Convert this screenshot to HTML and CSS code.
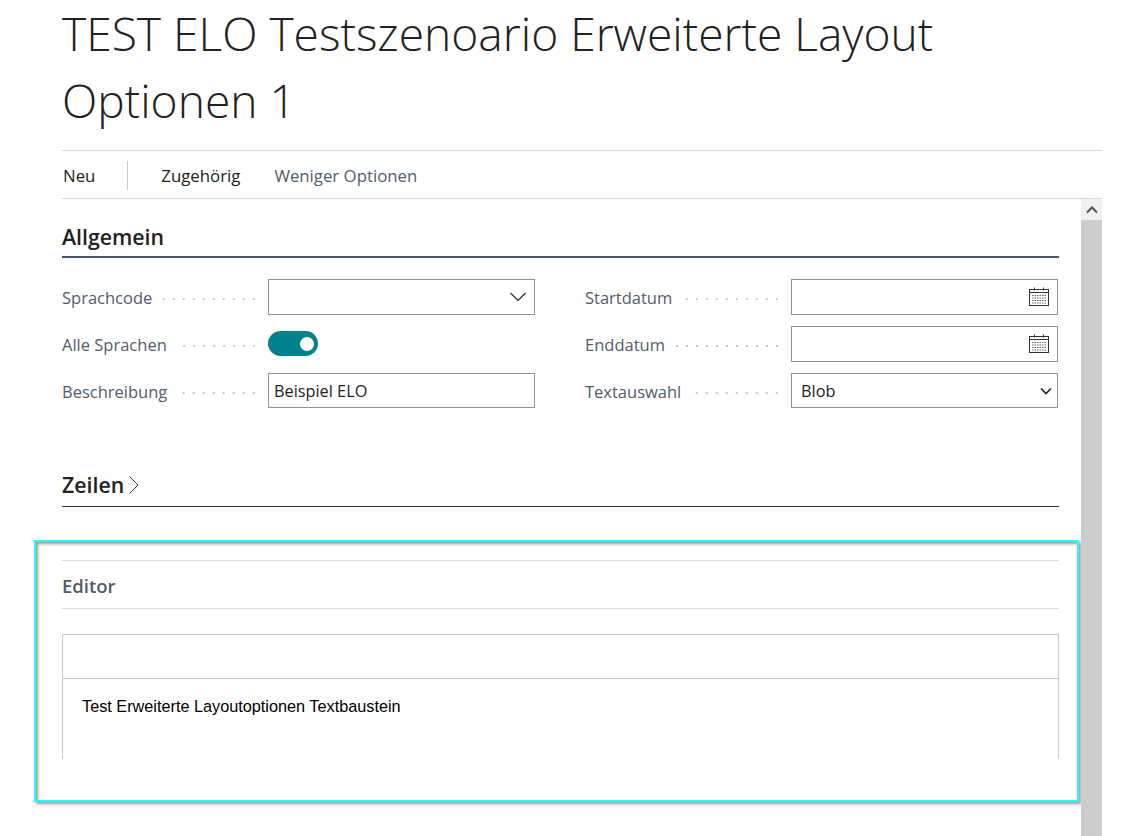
FILE: index.html
```html
<!DOCTYPE html>
<html lang="de">
<head>
<meta charset="utf-8">
<title>TEST ELO</title>
<link rel="stylesheet" href="styles.css">
</head>
<body>
<div class="page">
  <h1 class="title">TEST ELO Testszenoario Erweiterte Layout Optionen 1</h1>
  <nav class="commands">
    <span class="cmd cmd-new">Neu</span>
    <span class="cmd-sep"></span>
    <span class="cmd cmd-rel">Zugehörig</span>
    <span class="cmd cmd-less">Weniger Optionen</span>
  </nav>
  <div class="body">
    <main class="content">
      <h2 class="group-title">Allgemein</h2>
      <div class="fields">
        <div class="col">
          <div class="field">
            <span class="label">Sprachcode</span><span class="dots"></span>
            <div class="input input-tall">
              <svg class="chev-thin" width="16" height="10" viewBox="0 0 16 10"><path d="M.5 1 8 8.500 15.500 1" fill="none" stroke="#212121" stroke-width="1.100"/></svg>
            </div>
          </div>
          <div class="field">
            <span class="label">Alle Sprachen</span><span class="dots"></span>
            <div class="toggle"><span class="knob"></span></div>
          </div>
          <div class="field">
            <span class="label">Beschreibung</span><span class="dots"></span>
            <div class="input input-short"><span class="value">Beispiel ELO</span></div>
          </div>
        </div>
        <div class="col col-right">
          <div class="field">
            <span class="label">Startdatum</span><span class="dots"></span>
            <div class="input input-tall">
              <svg class="cal" width="20" height="20" viewBox="0 0 20 20"><use href="#cal-icon"/></svg>
            </div>
          </div>
          <div class="field">
            <span class="label">Enddatum</span><span class="dots"></span>
            <div class="input input-tall">
              <svg class="cal" width="20" height="20" viewBox="0 0 20 20"><use href="#cal-icon"/></svg>
            </div>
          </div>
          <div class="field">
            <span class="label">Textauswahl</span><span class="dots"></span>
            <div class="input input-short input-select">
              <span class="value">Blob</span>
              <svg class="chev-bold" width="12" height="8" viewBox="0 0 12 8"><path d="M1 1.500 6 6.500 11 1.500" fill="none" stroke="#222" stroke-width="1.600"/></svg>
            </div>
          </div>
        </div>
      </div>
      <div class="lines-head">
        <span class="lines-title">Zeilen</span>
        <svg width="10" height="18" viewBox="0 0 10 18"><path d="M.5 .5 9 9 .5 17.500" fill="none" stroke="#333" stroke-width="1"/></svg>
      </div>
      <section class="editor">
        <div class="editor-head">Editor</div>
        <div class="frame">
          <div class="frame-top"></div>
          <div class="frame-text">Test Erweiterte Layoutoptionen Textbaustein</div>
        </div>
      </section>
    </main>
    <div class="scrollbar">
      <div class="scroll-btn">
        <svg width="12" height="8" viewBox="0 0 12 8"><path d="M1 6.500 6 1.500 11 6.500" fill="none" stroke="#505050" stroke-width="2"/></svg>
      </div>
    </div>
  </div>
</div>
<svg class="defs" width="0" height="0">
  <defs>
    <g id="cal-icon" fill="none" stroke="#333" stroke-width="1">
      <rect x=".5" y="2.500" width="19" height="16"/>
      <path d="M.5 5.500H19.500M5.500 .5V3.500M14.500 .5V3.500" />
      <path d="M3 8.500H17M3 11H17M3 13.500H17M3 16H17" stroke="#666" stroke-dasharray="1.500 1"/>
    </g>
  </defs>
</svg>
</body>
</html>
```
FILE: styles.css
```css
* { box-sizing: border-box; }
html, body { margin: 0; padding: 0; height: 836px; overflow: hidden; background: #fff; }
body { font-family: "Open Sans", "Noto Sans", sans-serif; color: #212121; }
.page { margin-left: 62px; width: 1040px; }
.title {
  margin: 0;
  height: 150px;
  font-family: "Open Sans", sans-serif;
  font-weight: 300;
  font-size: 46.150px;
  line-height: 67px;
  color: #212121;
  width: 960px;
}
.commands {
  display: flex;
  align-items: center;
  height: 49px;
  padding-top: 1px;
  border-top: 1px solid #d5d9e0;
  border-bottom: 1px solid #d5d9e0;
  font-size: 16.800px;
}
.cmd-new { margin-left: 1px; color: #212121; }
.cmd-sep { width: 1px; height: 29px; background: #c8ccd2; margin-left: 32px; }
.cmd-rel { margin-left: 33px; color: #212121; }
.cmd-less { margin-left: 34px; color: #505c6d; }
.body { display: flex; height: 638px; }
.content { width: 1019px; flex: none; }
.scrollbar { width: 21px; background: #cdcdcd; flex: none; }
.scroll-btn { height: 21px; background: #f1f1f1; display: flex; align-items: center; justify-content: center; }
.group-title {
  margin: 0;
  width: 997px;
  height: 59px;
  padding-top: 21px;
  font-size: 21.300px;
  line-height: 34px;
  font-weight: 600;
  border-bottom: 2px solid #4a5363;
  color: #212121;
}
.fields { display: flex; width: 996px; margin-top: 21px; }
.col { width: 473px; }
.col-right { margin-left: 50px; }
.field { display: flex; align-items: flex-start; height: 47px; }
.label { font-size: 16.500px; color: #505c6d; flex: none; line-height: 37px; }
.dots {
  flex: 1;
  height: 2px;
  margin: 19px 13px 0 9px;
  background-image: radial-gradient(circle at 9px 1px, #c4c8ce 1px, transparent 1px);
  background-size: 10px 2px;
  background-position: right;
  background-repeat: repeat-x;
}
.input {
  width: 267px;
  flex: none;
  border: 1px solid #8a93a3;
  background: #fff;
  display: flex;
  align-items: center;
  justify-content: flex-end;
}
.input-tall { height: 36px; padding-right: 8px; }
.input-short { height: 35px; justify-content: flex-start; padding-left: 5px; }
.input-select { justify-content: space-between; padding-left: 9px; padding-right: 5px; }
.value { font-size: 16.300px; color: #212121; }
.toggle {
  width: 50px;
  height: 25px;
  border-radius: 13px;
  background: #00828d;
  flex: none;
  display: flex;
  align-items: center;
  justify-content: flex-end;
  padding-right: 4px;
  margin-right: 217px;
  margin-top: 5px;
}
.knob { width: 14px; height: 14px; border-radius: 50%; background: #fff; }
.lines-head {
  display: flex;
  align-items: center;
  gap: 5px;
  width: 997px;
  height: 48px;
  margin-top: 39px;
  border-bottom: 1px solid #333;
  padding-top: 5px;
}
.lines-title { font-size: 21.300px; font-weight: 600; color: #212121; line-height: 34px; }
.editor {
  margin: 33px 0 0 -28px;
  width: 1045px;
  height: 262px;
  border: 2px solid #22ffff;
  box-shadow: 2px 2px 3px rgba(0,0,0,.4), inset 2px 2px 3px rgba(0,0,0,.4);
  padding: 18px 0 0 26px;
}
.editor-head {
  width: 997px;
  height: 49px;
  border-top: 1px solid #d5d9e0;
  border-bottom: 1px solid #d5d9e0;
  font-size: 18.500px;
  font-weight: 600;
  line-height: 50px;
  color: #505c6d;
}
.frame {
  width: 997px;
  height: 125px;
  margin-top: 25px;
  border: 1px solid #c8c8c8;
  border-bottom: 0;
}
.frame-top { height: 44px; border-bottom: 1px solid #c8c8c8; }
.frame-text {
  padding: 17px 0 0 19px;
  font-family: "Liberation Sans", Arial, sans-serif;
  font-size: 16.250px;
  line-height: 20px;
  color: #000;
}
.defs { position: absolute; }
```
